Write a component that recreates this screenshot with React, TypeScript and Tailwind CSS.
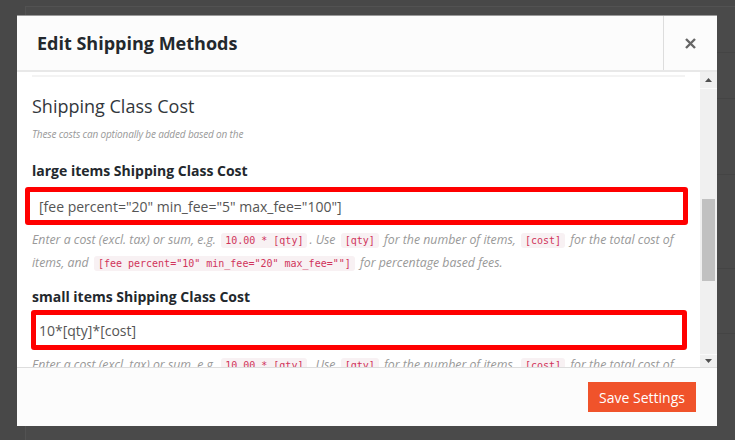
import React from "react";

const sans = { fontFamily: '"Open Sans", "Noto Sans", Arial, sans-serif' };

function Code({ children }: { children: React.ReactNode }) {
  return (
    <code className="mx-[2px] rounded-[3px] bg-[#f8f1f3] px-[4px] py-[2px] font-['DejaVu_Sans_Mono',monospace] text-[10px] not-italic text-[#d0345b]">
      {children}
    </code>
  );
}

function Description() {
  return (
    <p className="mt-[4px] text-[12.3px] italic leading-[22px] text-[#999]">
      Enter a cost (excl. tax) or sum, e.g. <Code>10.00 * [qty]</Code>. Use <Code>[qty]</Code> for the number of items, <Code>[cost]</Code> for the total cost of items, and{" "}
      <Code>[fee percent="10" min_fee="20" max_fee=""]</Code> for percentage based fees.
    </p>
  );
}

function Field({ label, value, boxClass }: { label: string; value: string; boxClass: string }) {
  return (
    <div>
      <h4 className="text-[14px] font-bold leading-[20px] text-[#23282d]">{label}</h4>
      <div className={`rounded-[3px] border-[5px] border-[#ff0000] bg-white ${boxClass}`}>
        <div className="flex h-full items-center text-[14px] text-[#555]">{value}</div>
      </div>
    </div>
  );
}

export default function App() {
  return (
    <div className="relative h-[440px] w-[735px] overflow-hidden bg-[#484848]" style={sans}>
      {/* page behind the modal */}
      <div className="absolute left-[25px] top-[6px] right-0 bottom-0 border-l border-t border-[#525252] bg-[#4a4a4a]">
        <div className="absolute right-0 top-[45px] h-px w-[30px] bg-[#444]" />
        <div className="absolute right-0 top-[91px] h-px w-[30px] bg-[#444]" />
        <div className="absolute right-0 top-[167px] h-px w-[30px] bg-[#444]" />
        <div className="absolute right-0 top-[261px] h-px w-[30px] bg-[#444]" />
        <div className="absolute right-0 top-[326px] h-px w-[30px] bg-[#444]" />
      </div>

      {/* modal */}
      <div className="absolute left-[17px] top-[15px] flex h-[411px] w-[700px] flex-col border-t border-[#9a9a9a] bg-white">
        {/* header */}
        <div className="flex h-[56px] shrink-0 items-stretch border-b-2 border-[#e8e8e8] bg-[#fcfcfc]">
          <h2 className="flex flex-1 items-center pl-[20px] text-[18px] font-bold text-[#23282d]">Edit Shipping Methods</h2>
          <button className="flex w-[54px] items-center justify-center border-l border-[#dddddd] text-[#666]">
            <svg width="11" height="11" viewBox="0 0 11 11">
              <path d="M1 1 L10 10 M10 1 L1 10" stroke="currentColor" strokeWidth="2.4" />
            </svg>
          </button>
        </div>

        {/* body */}
        <div className="flex min-h-0 flex-1">
          <div className="min-w-0 flex-1 overflow-hidden px-[15px]">
            <div className="mt-[3px] h-[2px] bg-[#f3f3f3]" />
            <h3 className="mt-[17px] text-[18px] leading-[24px] text-[#32373c]">Shipping Class Cost</h3>
            <p className="mt-[8px] text-[10px] tracking-[-0.15px] italic leading-[16px] text-[#999]">These costs can optionally be added based on the</p>
            <div className="mt-[19px]">
              <Field
                label="large items Shipping Class Cost"
                value={'[fee percent="20" min_fee="5" max_fee="100"]'}
                boxClass="mt-[6px] -ml-[7px] -mr-[3px] h-[38px] pl-[9px]"
              />
              <Description />
            </div>
            <div className="mt-[12px]">
              <Field label="small items Shipping Class Cost" value="10*[qty]*[cost]" boxClass="mt-[3px] -ml-[1px] -mr-[2px] h-[40px] pl-[3px]" />
              <Description />
            </div>
          </div>

          {/* scrollbar */}
          <div className="flex w-[17px] shrink-0 flex-col bg-[#f0f0f0]">
            <div className="flex h-[17px] items-center justify-center border-b border-[#fafafa]">
              <svg width="7" height="4" viewBox="0 0 7 4">
                <path d="M0 4 L3.5 0 L7 4 Z" fill="#505050" />
              </svg>
            </div>
            <div className="relative flex-1">
              <div className="absolute left-[2px] right-[2px] top-[110px] h-[82px] bg-[#c1c1c1]" />
            </div>
            <div className="flex h-[13px] items-center justify-center border-t border-[#fafafa]">
              <svg width="7" height="4" viewBox="0 0 7 4">
                <path d="M0 0 L7 0 L3.5 4 Z" fill="#505050" />
              </svg>
            </div>
          </div>
        </div>

        {/* footer */}
        <div className="flex h-[59px] shrink-0 items-center justify-end border-t border-[#dddddd] bg-[#fcfcfc] pr-[21px]">
          <button className="h-[30px] w-[108px] bg-[#f0532b] text-[14px] font-medium text-white">Save Settings</button>
        </div>
      </div>
    </div>
  );
}
